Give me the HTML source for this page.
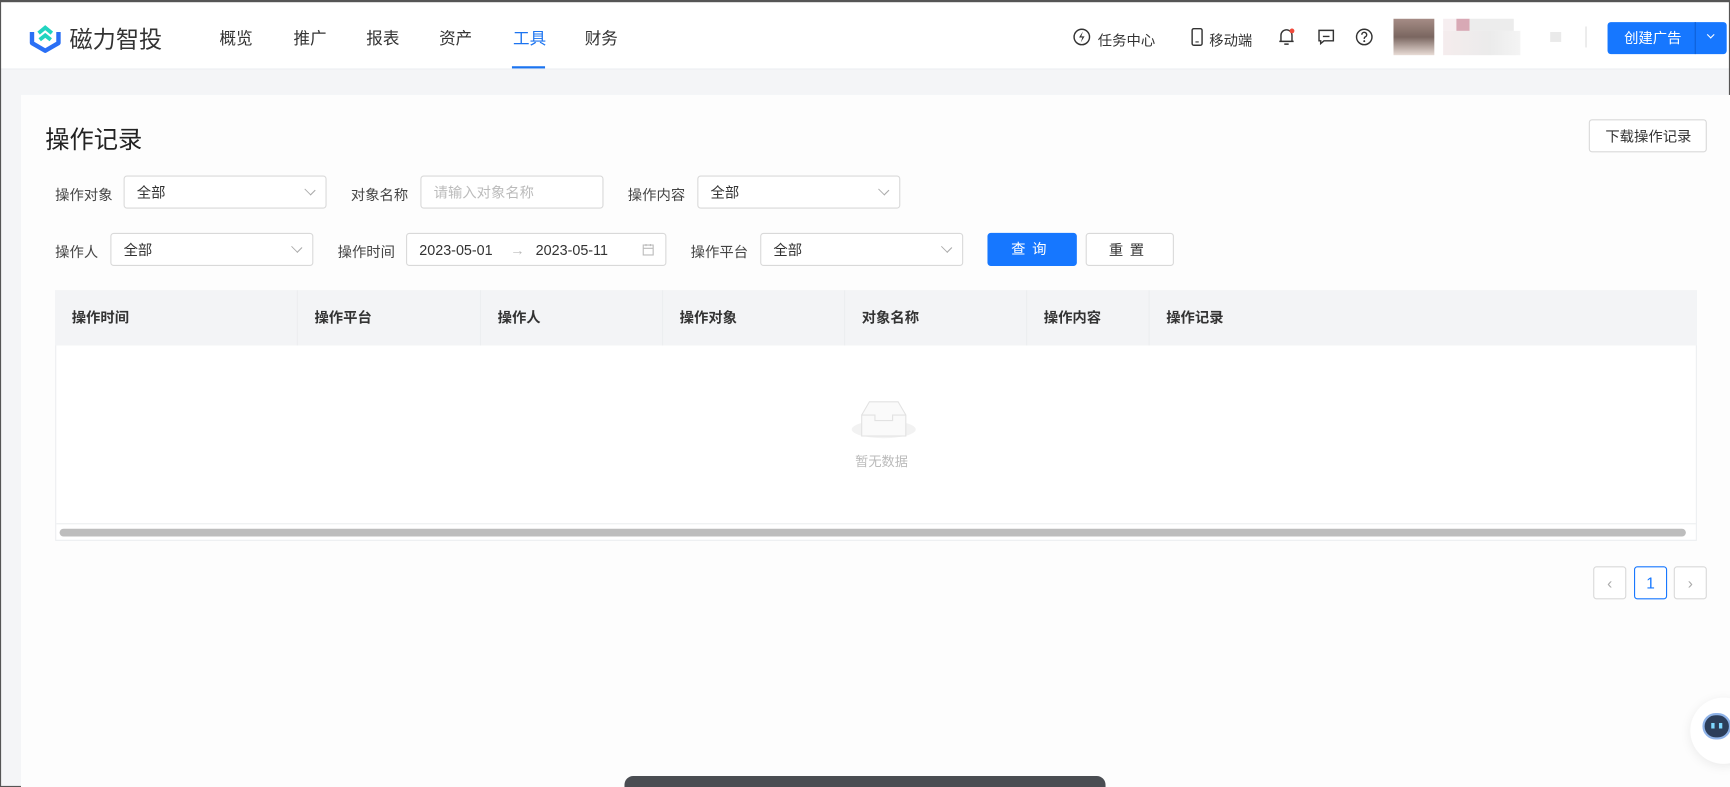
<!DOCTYPE html>
<html><head><meta charset="utf-8"><style>
*{box-sizing:border-box;margin:0;padding:0}
html,body{width:1730px;height:787px;overflow:hidden;background:#fff}
#w{position:absolute;left:0;top:0;width:1568px;height:713px;transform:scale(1.10332,1.1038);transform-origin:0 0;background:#f4f5f7;font-family:"Liberation Sans","Noto Sans CJK SC",sans-serif;color:#333;overflow:hidden}
.a{position:absolute}
.hdr{left:0;top:0;width:1568px;height:63px;background:#fff;border-bottom:1px solid #eceef1}
.nav{top:24px;font-size:15px;color:#333}
.card{left:19px;top:86px;width:1560px;height:640px;background:#fdfdfd}
.lbl{font-size:13px;color:#444}
.box{border:1px solid #d9d9d9;border-radius:3px;background:#fff;height:30px;font-size:13px;color:#333;padding:0 11px;line-height:29px}
.chev{position:absolute;right:10px;top:8px;width:8px;height:8px;border-right:1px solid #aaa;border-bottom:1px solid #aaa;transform:rotate(45deg) scale(1,.8)}
.th{top:263px;height:50px;line-height:50px;font-size:13px;color:#333;font-weight:bold;border-right:1px solid #eceef0;padding-left:15px}
.pg{width:30px;height:30px;border:1px solid #d9d9d9;border-radius:3px;background:#fff;text-align:center;line-height:28px;font-size:14px;color:#aaa}
</style></head><body><div id="w">
<div class="a hdr"></div>
<div class="a" style="left:0;top:0;width:1568px;height:2px;background:#555"></div>
<div class="a" style="left:0;top:0;width:1px;height:713px;background:#555"></div>
<div class="a" style="right:0;top:0;width:1px;height:713px;background:#555"></div>
<div class="a" style="left:0;bottom:0;width:1568px;height:1px;background:#555"></div>
<svg class="a" style="left:24px;top:19px" width="34" height="30" viewBox="0 0 34 30"><path d="M5 10 L5 20 L17 27 L29 20 L29 10" fill="none" stroke="#2a6ff5" stroke-width="4" stroke-linejoin="round"/><path d="M11 11 L17 6 L23 11" fill="none" stroke="#22d4c0" stroke-width="3.5"/><path d="M12 17 L17 13 L22 17" fill="none" stroke="#22d4c0" stroke-width="3.5"/></svg>
<div class="a" style="left:63px;top:20px;font-size:21px;color:#333">磁力智投</div>
<div class="a nav" style="left:199px">概览</div>
<div class="a nav" style="left:266px">推广</div>
<div class="a nav" style="left:332px">报表</div>
<div class="a nav" style="left:398px">资产</div>
<div class="a nav" style="left:465px;color:#1c74f0">工具</div>
<div class="a" style="left:464px;top:60px;width:30px;height:2px;background:#1c74f0"></div>
<div class="a nav" style="left:530px">财务</div>
<svg class="a" style="left:972px;top:25px" width="17" height="17" viewBox="0 0 17 17"><circle cx="8.5" cy="8.5" r="7" fill="none" stroke="#333" stroke-width="1.3"/><path d="M9.5 3.5 L6 9 H9 L7.5 13.5 L11 8 H8 Z" fill="#333"/></svg>
<div class="a" style="left:995px;top:26px;font-size:13px">任务中心</div>
<svg class="a" style="left:1079px;top:25px" width="12" height="17" viewBox="0 0 12 17"><rect x="1.5" y="1" width="9" height="15" rx="1.5" fill="none" stroke="#333" stroke-width="1.3"/><path d="M4.5 13h3" stroke="#333"/></svg>
<div class="a" style="left:1096px;top:26px;font-size:13px">移动端</div>
<svg class="a" style="left:1158px;top:24px" width="16" height="18" viewBox="0 0 16 18"><path d="M3 13 V8 a5 5 0 0 1 10 0 V13 M1.5 13.5 H14.5 M6 16 H10" fill="none" stroke="#333" stroke-width="1.3"/><circle cx="13" cy="4" r="2.2" fill="#f04a3c"/></svg>
<svg class="a" style="left:1194px;top:26px" width="16" height="15" viewBox="0 0 16 15"><path d="M1.5 1.5 H14.5 V11 H6 L3 13.5 V11 H1.5 Z" fill="none" stroke="#333" stroke-width="1.3"/><path d="M5 7h6" stroke="#333" stroke-width="1.3"/></svg>
<svg class="a" style="left:1228px;top:25px" width="17" height="17" viewBox="0 0 17 17"><circle cx="8.5" cy="8.5" r="7" fill="none" stroke="#333" stroke-width="1.3"/><path d="M6.3 6.5 a2.2 2.2 0 1 1 3 2 c-.7.3-.8.8-.8 1.7" fill="none" stroke="#333" stroke-width="1.3"/><circle cx="8.5" cy="12.3" r=".9" fill="#333"/></svg>
<div class="a" style="left:1263px;top:17px;width:37px;height:33px;background:linear-gradient(#a58c85,#7a6660 50%,#e8dcd6)"></div>
<div class="a" style="left:1308px;top:17px;width:12px;height:11px;background:#f6eef0"></div>
<div class="a" style="left:1320px;top:17px;width:12px;height:11px;background:#d8a9b5"></div>
<div class="a" style="left:1332px;top:17px;width:40px;height:11px;background:#ececec"></div>
<div class="a" style="left:1308px;top:28px;width:70px;height:22px;background:linear-gradient(90deg,#f5eced,#ebebeb 60%,#f4f4f4)"></div>
<div class="a" style="left:1405px;top:29px;width:10px;height:9px;background:#eaeaea"></div>
<div class="a" style="left:1437px;top:24px;width:1px;height:19px;background:#ddd"></div>
<div class="a" style="left:1457px;top:20px;width:108px;height:29px;background:#1677ff;border-radius:3px;color:#fff;font-size:13px;line-height:29px;padding-left:15px">创建广告</div>
<div class="a" style="left:1536px;top:20px;width:1px;height:29px;background:#0e5fd6"></div>
<div class="a" style="left:1548px;top:29px;width:5px;height:5px;border-right:1px solid #fff;border-bottom:1px solid #fff;transform:rotate(45deg)"></div>
<div class="a card"></div>
<div class="a" style="left:41px;top:109px;font-size:22px;color:#222">操作记录</div>
<div class="a box" style="left:1440px;top:108px;width:107px;height:30px;font-size:13px;padding-left:14px">下载操作记录</div>
<div class="a lbl" style="left:50px;top:166px">操作对象</div>
<div class="a box" style="left:112px;top:159px;width:184px">全部<i class="chev"></i></div>
<div class="a lbl" style="left:318px;top:166px">对象名称</div>
<div class="a box" style="left:381px;top:159px;width:166px;color:#bbb">请输入对象名称</div>
<div class="a lbl" style="left:569px;top:166px">操作内容</div>
<div class="a box" style="left:632px;top:159px;width:184px">全部<i class="chev"></i></div>
<div class="a lbl" style="left:50px;top:218px">操作人</div>
<div class="a box" style="left:100px;top:211px;width:184px">全部<i class="chev"></i></div>
<div class="a lbl" style="left:306px;top:218px">操作时间</div>
<div class="a box" style="left:368px;top:211px;width:236px">2023-05-01<span style="color:#bbb;margin:0 10px 0 16px">→</span>2023-05-11<svg style="position:absolute;right:10px;top:8px" width="11" height="12" viewBox="0 0 11 12"><rect x="1" y="2" width="9" height="9" fill="none" stroke="#bbb"/><path d="M1 5h9M3.5 1v2M7.5 1v2" stroke="#bbb"/></svg></div>
<div class="a lbl" style="left:626px;top:218px">操作平台</div>
<div class="a box" style="left:689px;top:211px;width:184px">全部<i class="chev"></i></div>
<div class="a" style="left:895px;top:211px;width:81px;height:30px;background:#1677ff;border-radius:3px;color:#fff;font-size:13px;text-align:center;line-height:30px;letter-spacing:6px">查询</div>
<div class="a box" style="left:984px;top:211px;width:80px;text-align:center;letter-spacing:6px">重置</div>
<div class="a" style="left:50px;top:263px;width:1488px;height:227px;border:1px solid #eceef0;background:#fff"></div>
<div class="a" style="left:50px;top:263px;width:1488px;height:50px;background:#f3f4f6"></div>
<div class="a th" style="left:50px;width:220px">操作时间</div>
<div class="a th" style="left:270px;width:166px">操作平台</div>
<div class="a th" style="left:436px;width:165px">操作人</div>
<div class="a th" style="left:601px;width:165px">操作对象</div>
<div class="a th" style="left:766px;width:165px">对象名称</div>
<div class="a th" style="left:931px;width:111px">操作内容</div>
<div class="a th" style="left:1042px;width:495px;border:0">操作记录</div>
<div class="a" style="left:772px;top:381px;width:58px;height:16px;border-radius:50%;background:#f2f2f2"></div>
<svg class="a" style="left:780px;top:363px" width="42" height="33" viewBox="0 0 42 33"><path d="M1 13 L8 1 H34 L41 13 V32 H1 Z" fill="#fafafa" stroke="#e2e2e2"/><path d="M1 13 H13 V18 H29 V13 H41" fill="none" stroke="#e2e2e2"/></svg>
<div class="a" style="left:775px;top:409px;font-size:12px;color:#bbb">暂无数据</div>
<div class="a" style="left:51px;top:474px;width:1486px;height:1px;background:#eceef0"></div>
<div class="a" style="left:54px;top:479px;width:1474px;height:7px;border-radius:4px;background:#bdbdbd"></div>
<div class="a pg" style="left:1444px;top:513px">‹</div>
<div class="a pg" style="left:1481px;top:513px;border-color:#1677ff;color:#1677ff">1</div>
<div class="a pg" style="left:1517px;top:513px">›</div>
<div class="a" style="left:1532px;top:632px;width:60px;height:60px;border-radius:50%;background:#fff;box-shadow:0 2px 10px rgba(0,0,0,.08)"></div>
<div class="a" style="left:1543px;top:646px;width:26px;height:24px;border-radius:12px;background:#2c3e5a;border:2px solid #8fb3e8"></div>
<div class="a" style="left:1551px;top:655px;width:3px;height:5px;background:#7fd8ff"></div>
<div class="a" style="left:1558px;top:655px;width:3px;height:5px;background:#7fd8ff"></div>
<div class="a" style="left:566px;top:703px;width:436px;height:12px;border-radius:8px 8px 0 0;background:#4a4d52"></div>
</div></body></html>
